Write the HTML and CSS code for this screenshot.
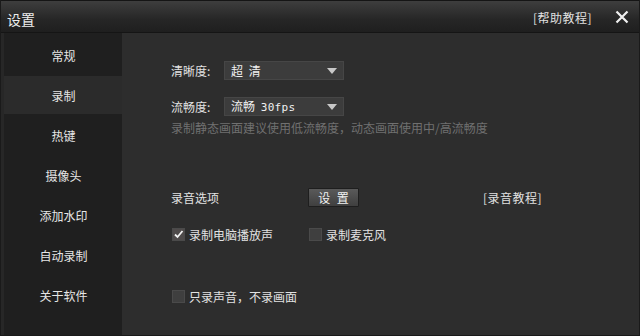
FILE: index.html
```html
<!DOCTYPE html>
<html lang="zh">
<head>
<meta charset="utf-8">
<link rel="stylesheet" href="styles.css">
</head>
<body>
<div class="win">
  <header class="titlebar">
    <span class="title">设置</span>
    <span class="help">[帮助教程]</span>
    <span class="close"><svg width="14" height="14" viewBox="0 0 14 14"><path d="M1.5 1.5 L12.5 12.5 M12.5 1.5 L1.5 12.5" stroke="#f0f0f0" stroke-width="2.2" fill="none"/></svg></span>
  </header>
  <div class="content">
    <nav class="side">
      <div class="item">常规</div>
      <div class="item active">录制</div>
      <div class="item">热键</div>
      <div class="item">摄像头</div>
      <div class="item">添加水印</div>
      <div class="item">自动录制</div>
      <div class="item">关于软件</div>
    </nav>
    <main class="main">
      <div class="row r1">
        <span class="label">清晰度:</span>
        <div class="select"><span class="val">超 清</span><i class="arrow"></i></div>
      </div>
      <div class="row r2">
        <span class="label">流畅度:</span>
        <div class="select"><span class="val">流畅 <span class="mono">30fps</span></span><i class="arrow"></i></div>
      </div>
      <div class="hint">录制静态画面建议使用低流畅度，动态画面使用中/高流畅度</div>
      <div class="row r3">
        <span class="label2">录音选项</span>
        <button class="btn">设 置</button>
        <span class="link">[录音教程]</span>
      </div>
      <div class="row r4">
        <label class="check"><i class="box checked"><svg width="11" height="11" viewBox="0 0 11 11"><path d="M2 5.5 L4.5 8 L9.5 2" stroke="#f2f2f2" stroke-width="1.8" fill="none"/></svg></i><span>录制电脑播放声</span></label>
        <label class="check"><i class="box"></i><span>录制麦克风</span></label>
      </div>
      <div class="row r5">
        <label class="check"><i class="box"></i><span>只录声音，不录画面</span></label>
      </div>
    </main>
  </div>
</div>
</body>
</html>
```
FILE: styles.css
```css
* { box-sizing: border-box; }
html, body { margin: 0; padding: 0; background: #2d2d2d; }
body {
  font-family: "Noto Sans CJK SC", "Liberation Sans", sans-serif;
  font-size: 12px;
  color: #e2e2e2;
}
.win {
  width: 640px;
  height: 336px;
  display: flex;
  flex-direction: column;
  background: #2d2d2d;
  border: 1px solid #1a1a1a;
  border-top: none;
  overflow: hidden;
}
.titlebar {
  height: 33px;
  flex: none;
  display: flex;
  align-items: center;
  background: linear-gradient(#3e3e3e, #262626 60%, #1f1f1f);
  border-top: 1px solid #151515;
  border-bottom: 1px solid #151515;
}
.title {
  font-size: 14px;
  color: #eeeeee;
  margin-left: 6px;
  margin-top: 4px;
  line-height: 16px;
}
.help {
  margin-left: auto;
  color: #e0e0e0;
  line-height: 16px;
  margin-top: 2px;
  letter-spacing: 0.5px;
}
.close {
  display: flex;
  margin-left: 23px;
  margin-right: 10px;
  width: 14px;
  height: 14px;
}
.content {
  flex: 1;
  display: flex;
  min-height: 0;
}
.side {
  width: 121px;
  flex: none;
  background: #1f1f1f;
  border-left: 3px solid #272727;
  padding-top: 3px;
  display: flex;
  flex-direction: column;
  gap: 2px;
}
.item {
  height: 38px;
  display: flex;
  align-items: center;
  justify-content: center;
  color: #e6e6e6;
  padding-left: 1px;
}
.item.active { background: #2b2b2b; }
.main {
  flex: 1;
  padding-left: 49px;
  padding-top: 28px;
  display: flex;
  flex-direction: column;
}
.row {
  display: flex;
  align-items: center;
}
.r1, .r2, .r3 { height: 19px; }
.r2 { margin-top: 17px; }
.label { width: 53px; color: #e2e2e2; }
.select {
  width: 120px;
  height: 19px;
  background: #3c3c3c;
  border: 1px solid #464646;
  display: flex;
  align-items: center;
  padding-left: 6px;
  color: #f0f0f0;
}
.val { line-height: 16px; word-spacing: 3px; }
.mono { font-family: "DejaVu Sans Mono", "Liberation Mono", monospace; font-size: 11px; letter-spacing: 0.3px; }
.arrow {
  margin-left: auto;
  margin-right: 6px;
  width: 0;
  height: 0;
  border-left: 5px solid transparent;
  border-right: 5px solid transparent;
  border-top: 6px solid #c8c8c8;
}
.hint {
  margin-top: 4px;
  line-height: 16px;
  color: #707070;
}
.r3 { margin-top: 52px; }
.label2 { width: 137px; }
.btn {
  width: 51px;
  height: 19px;
  padding: 0;
  font: inherit;
  color: #f2f2f2;
  background: linear-gradient(#5a5a5a, #3f3f3f);
  border: 1px solid #1e1e1e;
  border-radius: 1px;
  line-height: 16px;
  word-spacing: 4px;
}
.link { margin-left: 124px; color: #e0e0e0; letter-spacing: 0.5px; }
.r4 { margin-top: 19px; height: 16px; }
.r5 { margin-top: 46px; height: 16px; }
.check {
  display: flex;
  align-items: center;
  width: 137px;
  padding-left: 1px;
  gap: 4px;
}
.box {
  width: 13px;
  height: 13px;
  background: #3f3f3f;
  border: 1px solid #4a4a4a;
  display: flex;
  align-items: center;
  justify-content: center;
}
.box.checked { background: #4e4a4a; }
```
